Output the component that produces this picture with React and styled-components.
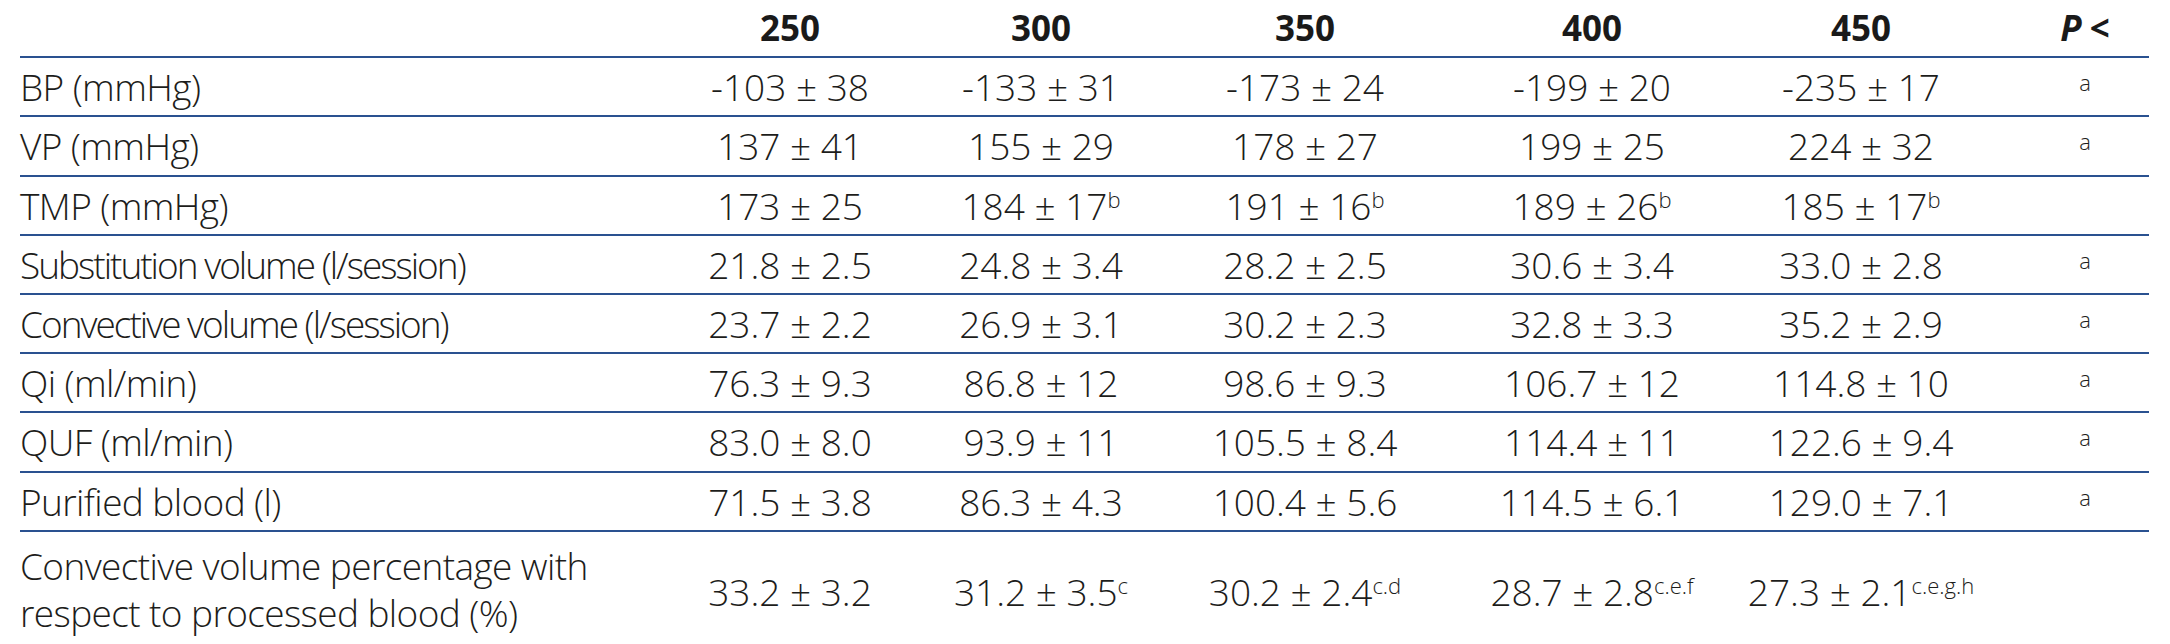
import React from 'react';
import styled, { createGlobalStyle } from 'styled-components';

const GlobalStyle = createGlobalStyle`
  html, body {
    margin: 0;
    padding: 0;
    background: #ffffff;
    overflow: hidden;
  }
  body {
    font-family: "Open Sans", "Noto Sans", "Liberation Sans", sans-serif;
    color: #1d1d1b;
  }
`;

const COLS = '605px 330px 172px 356px 218px 320px 128px';

const Table = styled.div`
  display: flex;
  flex-direction: column;
  width: 2129px;
  padding-left: 20px;
`;

const Row = styled.div`
  display: grid;
  grid-template-columns: ${COLS};
  align-items: start;
  border-bottom: ${p => (p.$last ? 'none' : '2px solid #2a5190')};
  padding: ${p => (p.$head ? '11px 0 11.3px' : p.$last ? '10px 0 8px' : '12px 0 11.2px')};
`;

const Label = styled.div`
  font-size: 37px;
  font-weight: 330;
  line-height: ${p => (p.$wrap ? '47px' : '34px')};
  letter-spacing: ${p => (p.$tight ? '-2px' : '-0.6px')};
  white-space: nowrap;
`;

const Cell = styled.div`
  display: flex;
  justify-content: center;
  white-space: nowrap;
  font-size: 37px;
  font-weight: 330;
  line-height: 34px;
  padding-top: ${p => (p.$drop ? '33.7px' : '0')};
`;

const Head = styled.div`
  display: flex;
  justify-content: center;
  white-space: nowrap;
  font-size: 35px;
  font-weight: 700;
  line-height: 34px;
  color: #1a1a1a;
`;

const Italic = styled.i`
  font-style: italic;
  margin-right: 8px;
`;

const Sup = styled.span`
  font-size: 22px;
  line-height: 0;
  vertical-align: ${p => (p.$low ? '10px' : '12px')};
`;

const heads = ['250', '300', '350', '400', '450'];

const rows = [
  { label: 'BP (mmHg)', vals: ['-103 ± 38', '-133 ± 31', '-173 ± 24', '-199 ± 20', '-235 ± 17'], p: 'a' },
  { label: 'VP (mmHg)', vals: ['137 ± 41', '155 ± 29', '178 ± 27', '199 ± 25', '224 ± 32'], p: 'a' },
  {
    label: 'TMP (mmHg)',
    vals: ['173 ± 25', ['184 ± 17', 'b'], ['191 ± 16', 'b'], ['189 ± 26', 'b'], ['185 ± 17', 'b']],
    p: '',
  },
  { label: 'Substitution volume (l/session)', tight: true, vals: ['21.8 ± 2.5', '24.8 ± 3.4', '28.2 ± 2.5', '30.6 ± 3.4', '33.0 ± 2.8'], p: 'a' },
  { label: 'Convective volume (l/session)', tight: true, vals: ['23.7 ± 2.2', '26.9 ± 3.1', '30.2 ± 2.3', '32.8 ± 3.3', '35.2 ± 2.9'], p: 'a' },
  { label: 'Qi (ml/min)', vals: ['76.3 ± 9.3', '86.8 ± 12', '98.6 ± 9.3', '106.7 ± 12', '114.8 ± 10'], p: 'a' },
  { label: 'QUF (ml/min)', vals: ['83.0 ± 8.0', '93.9 ± 11', '105.5 ± 8.4', '114.4 ± 11', '122.6 ± 9.4'], p: 'a' },
  { label: 'Purified blood (l)', vals: ['71.5 ± 3.8', '86.3 ± 4.3', '100.4 ± 5.6', '114.5 ± 6.1', '129.0 ± 7.1'], p: 'a' },
];

const lastVals = [
  ['33.2 ± 3.2', ''],
  ['31.2 ± 3.5', 'c'],
  ['30.2 ± 2.4', 'c.d'],
  ['28.7 ± 2.8', 'c.e.f'],
  ['27.3 ± 2.1', 'c.e.g.h'],
];

const Value = ({ v, drop }) => {
  const [main, sup] = Array.isArray(v) ? v : [v, ''];
  return (
    <Cell $drop={drop}>
      <span>
        {main}
        {sup && <Sup>{sup}</Sup>}
      </span>
    </Cell>
  );
};

export default function App() {
  return (
    <>
      <GlobalStyle />
      <Table>
        <Row $head>
          <div />
          {heads.map(h => (
            <Head key={h}>{h}</Head>
          ))}
          <Head>
            <span>
              <Italic>P</Italic>&lt;
            </span>
          </Head>
        </Row>
        {rows.map(r => (
          <Row key={r.label}>
            <Label $tight={r.tight}>{r.label}</Label>
            {r.vals.map((v, i) => (
              <Value key={i} v={v} />
            ))}
            <Cell>
              <span>{r.p && <Sup $low>{r.p}</Sup>}</span>
            </Cell>
          </Row>
        ))}
        <Row $last>
          <Label $wrap>
            Convective volume percentage with
            <br />
            respect to processed blood (%)
          </Label>
          {lastVals.map((v, i) => (
            <Value key={i} v={v} drop />
          ))}
          <Cell />
        </Row>
      </Table>
    </>
  );
}
